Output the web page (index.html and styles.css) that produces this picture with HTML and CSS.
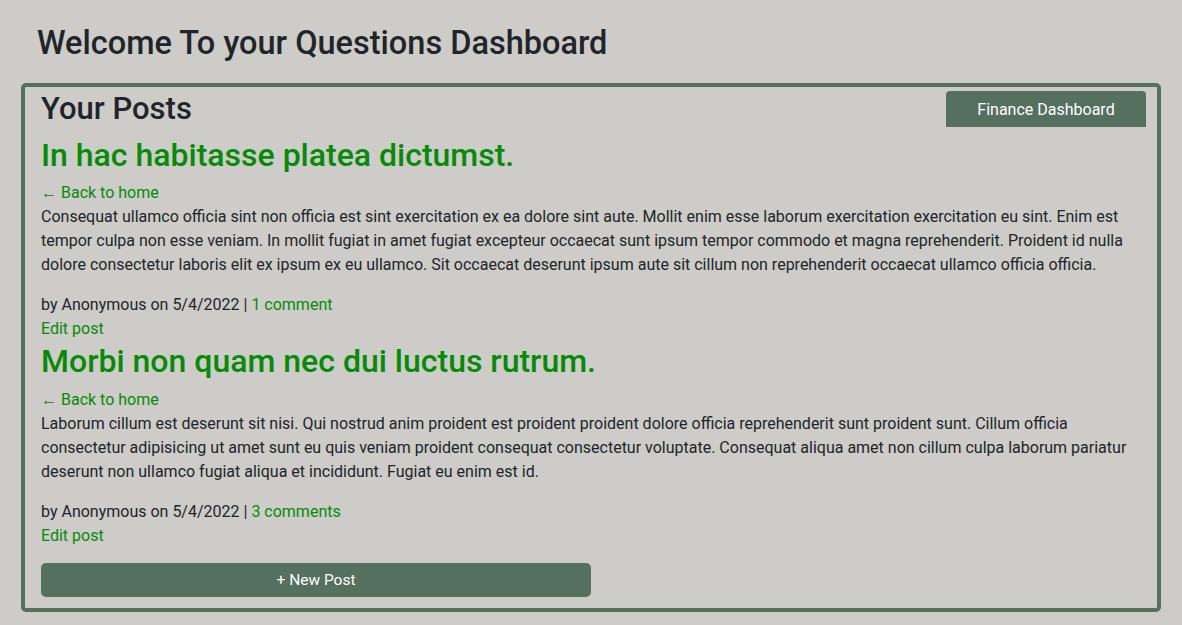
FILE: index.html
```html
<!DOCTYPE html>
<html lang="en">
<head>
<meta charset="utf-8">
<title>Questions Dashboard</title>
<link rel="stylesheet" href="styles.css">
</head>
<body>
<main class="page">
  <h1 class="welcome">Welcome To your Questions Dashboard</h1>
  <section class="card">
    <div class="card-header">
      <h2 class="card-title">Your Posts</h2>
      <a class="btn btn-finance" href="#">Finance Dashboard</a>
    </div>

    <article class="post">
      <h2 class="post-title">In hac habitasse platea dictumst.</h2>
      <div><a class="link" href="#">&larr; Back to home</a></div>
      <p class="post-body">Consequat ullamco officia sint non officia est sint exercitation ex ea dolore sint aute. Mollit enim esse laborum exercitation exercitation eu sint. Enim est tempor culpa non esse veniam. In mollit fugiat in amet fugiat excepteur occaecat sunt ipsum tempor commodo et magna reprehenderit. Proident id nulla dolore consectetur laboris elit ex ipsum ex eu ullamco. Sit occaecat deserunt ipsum aute sit cillum non reprehenderit occaecat ullamco officia officia.</p>
      <div class="meta">by Anonymous on 5/4/2022 | <a class="link" href="#">1 comment</a></div>
      <div><a class="link" href="#">Edit post</a></div>
    </article>

    <article class="post">
      <h2 class="post-title">Morbi non quam nec dui luctus rutrum.</h2>
      <div><a class="link" href="#">&larr; Back to home</a></div>
      <p class="post-body">Laborum cillum est deserunt sit nisi. Qui nostrud anim proident est proident proident dolore officia reprehenderit sunt proident sunt. Cillum officia consectetur adipisicing ut amet sunt eu quis veniam proident consequat consectetur voluptate. Consequat aliqua amet non cillum culpa laborum pariatur deserunt non ullamco fugiat aliqua et incididunt. Fugiat eu enim est id.</p>
      <div class="meta">by Anonymous on 5/4/2022 | <a class="link" href="#">3 comments</a></div>
      <div><a class="link" href="#">Edit post</a></div>
    </article>

    <div class="actions">
      <a class="btn btn-new" href="#">+ New Post</a>
    </div>
  </section>
</main>
</body>
</html>
```
FILE: styles.css
```css
html, body {
  margin: 0;
  padding: 0;
  background: #cdccc8;
}
body {
  font-family: "Segoe UI", Roboto, "Liberation Sans", sans-serif;
  font-size: 16px;
  line-height: 24px;
  color: #212529;
}
.page {
  padding: 24px 21px 0 21px;
}
.welcome {
  margin: 0 0 20px 16px;
  font-size: 32.5px;
  line-height: 39px;
  font-weight: 500;
  color: #212529;
}
.card {
  border: 4px solid #55705f;
  border-radius: 5px;
  padding: 0 16px 11px 16px;
}
.card-header {
  display: flex;
  justify-content: space-between;
  align-items: flex-start;
  margin-bottom: 9px;
}
.card-title {
  margin: 3px 0 0 0;
  font-size: 31px;
  line-height: 37px;
  font-weight: 500;
}
.btn {
  display: flex;
  align-items: center;
  justify-content: center;
  background: #55705f;
  color: #ffffff;
  text-decoration: none;
  font-size: 16px;
}
.btn-finance {
  width: 200px;
  height: 36px;
  margin: 4px -5px 0 0;
  padding-top: 2px;
  box-sizing: border-box;
  border-radius: 4px 4px 0 0;
}
.post-title {
  margin: 1px 0 7px 0;
  font-size: 32px;
  line-height: 38.4px;
  font-weight: 500;
  color: #078a07;
}
.link {
  color: #078a07;
  text-decoration: none;
}
.post-body {
  margin: 0 0 16px 0;
}
.actions {
  margin-top: 15px;
}
.btn-new {
  width: 550px;
  height: 34px;
  border-radius: 5px;
  font-size: 15.5px;
}
```
